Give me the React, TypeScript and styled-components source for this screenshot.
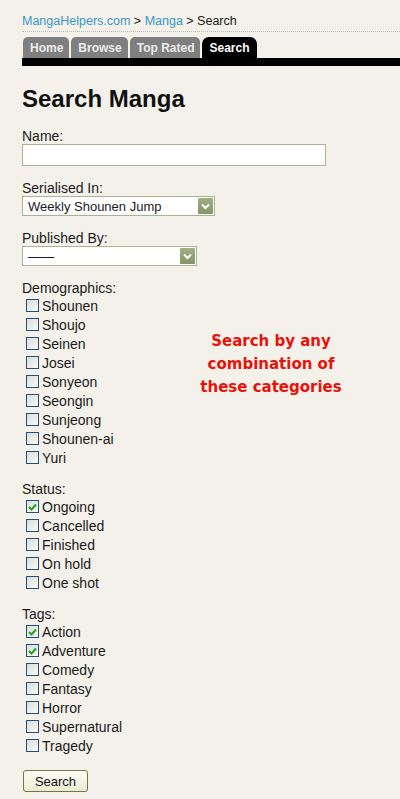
import React from 'react';
import styled, { createGlobalStyle } from 'styled-components';

const GlobalStyle = createGlobalStyle`
  html, body {
    margin: 0;
    padding: 0;
    background: #f4f1ea;
  }
  body {
    font-family: "Liberation Sans", Arial, sans-serif;
    color: #1a1a1a;
  }
`;

const Page = styled.div`
  padding: 13px 0 8px 22px;
`;

const Breadcrumb = styled.div`
  font-size: 12.5px;
  line-height: 16px;
  padding-bottom: 2px;
  border-bottom: 1px dotted #b9b9b9;
  color: #1a1a1a;
`;

const Crumb = styled.a`
  color: #3a97c4;
  text-decoration: none;
`;

const TabBar = styled.div`
  display: flex;
  gap: 2px;
  margin-top: 5px;
  padding-left: 1px;
`;

const Tab = styled.a<{ $active?: boolean }>`
  display: block;
  height: 21px;
  line-height: 22px;
  padding: ${p => (p.$active ? '0 7px' : '0 6px 0 7px')};
  border-radius: ${p => (p.$active ? '7px 7px 0 0' : '5px 5px 0 0')};
  background: ${p => (p.$active ? '#000' : '#7f7f7f')};
  color: ${p => (p.$active ? '#fff' : '#ececec')};
  font-size: 12px;
  font-weight: bold;
  text-decoration: none;
`;

const TabRule = styled.div`
  height: 8px;
  background: #000;
`;

const Title = styled.h1`
  margin: 19px 0 15px;
  font-size: 24px;
  line-height: 28px;
  font-weight: bold;
  color: #111;
`;

const Group = styled.div`
  margin-bottom: 14px;
`;

const Label = styled.label`
  display: block;
  font-size: 14px;
  line-height: 16px;
`;

const TextInput = styled.input`
  display: block;
  box-sizing: border-box;
  width: 304px;
  height: 22px;
  margin: 0;
  border: 1px solid #a9b38e;
  background: #fff;
`;

const SelectBox = styled.div<{ $width: number }>`
  display: flex;
  align-items: center;
  box-sizing: border-box;
  width: ${p => p.$width}px;
  height: 20px;
  padding: 1px;
  border: 1px solid #a9b38e;
  background: #fff;
`;

const SelectValue = styled.span`
  flex: 1;
  padding-left: 4px;
  font-size: 13px;
  white-space: nowrap;
`;

const SelectArrow = styled.span`
  display: flex;
  align-items: center;
  justify-content: center;
  width: 15px;
  height: 16px;
  background: linear-gradient(#a1ae86, #84936a);
  border-radius: 1px;
`;

const CheckRow = styled.label`
  display: flex;
  align-items: center;
  gap: 3px;
  height: 19px;
  padding-left: 4px;
  font-size: 14px;
`;

const Box = styled.span`
  display: flex;
  align-items: center;
  justify-content: center;
  box-sizing: border-box;
  width: 13px;
  height: 13px;
  border: 1px solid #1c5180;
  background: linear-gradient(135deg, #dcdcd4, #fbfbf8);
`;

const Split = styled.div`
  display: flex;
`;

const CheckList = styled.div`
  flex: 0 0 140px;
`;

const Note = styled.div`
  flex: 0 0 218px;
  margin-top: 34px;
  text-align: center;
  font-family: "DejaVu Sans", Verdana, sans-serif;
  font-weight: bold;
  font-size: 15px;
  line-height: 23px;
  color: #e8120c;
`;

const SubmitButton = styled.button`
  display: block;
  box-sizing: border-box;
  width: 65px;
  height: 22px;
  margin-top: 15px;
  margin-left: 1px;
  padding: 0;
  border: 1px solid #6e7b3e;
  border-radius: 3px;
  background: linear-gradient(#fdfdf6, #ebead4);
  font-family: "Liberation Sans", Arial, sans-serif;
  font-size: 13px;
  color: #111;
`;

const Chevron = () => (
  <svg width="9" height="7" viewBox="0 0 9 7">
    <path d="M1 1.5 L4.5 5 L8 1.5" fill="none" stroke="#fff" strokeWidth="2" />
  </svg>
);

const Check = () => (
  <svg width="9" height="8" viewBox="0 0 9 8">
    <path d="M1 4 L3.5 6.5 L8 1.5" fill="none" stroke="#21a121" strokeWidth="2" />
  </svg>
);

const Checkbox = ({ label, checked }: { label: string; checked?: boolean }) => (
  <CheckRow>
    <Box>{checked && <Check />}</Box>
    {label}
  </CheckRow>
);

const Select = ({ value, width }: { value: string; width: number }) => (
  <SelectBox $width={width}>
    <SelectValue>{value}</SelectValue>
    <SelectArrow>
      <Chevron />
    </SelectArrow>
  </SelectBox>
);

const demographics = [
  'Shounen', 'Shoujo', 'Seinen', 'Josei', 'Sonyeon',
  'Seongin', 'Sunjeong', 'Shounen-ai', 'Yuri'
];
const statuses = ['Ongoing', 'Cancelled', 'Finished', 'On hold', 'One shot'];
const tags = ['Action', 'Adventure', 'Comedy', 'Fantasy', 'Horror', 'Supernatural', 'Tragedy'];
const checkedStatus = ['Ongoing'];
const checkedTags = ['Action', 'Adventure'];

const App = () => (
  <>
    <GlobalStyle />
    <Page>
      <Breadcrumb>
        <Crumb href="#">MangaHelpers.com</Crumb> &gt; <Crumb href="#">Manga</Crumb> &gt; Search
      </Breadcrumb>
      <TabBar>
        <Tab href="#">Home</Tab>
        <Tab href="#">Browse</Tab>
        <Tab href="#">Top Rated</Tab>
        <Tab href="#" $active>Search</Tab>
      </TabBar>
      <TabRule />

      <Title>Search Manga</Title>

      <Group>
        <Label>Name:</Label>
        <TextInput type="text" />
      </Group>

      <Group>
        <Label>Serialised In:</Label>
        <Select value="Weekly Shounen Jump" width={193} />
      </Group>

      <Group>
        <Label>Published By:</Label>
        <Select value="——" width={175} />
      </Group>

      <Group>
        <Label>Demographics:</Label>
        <Split>
          <CheckList>
            {demographics.map(d => <Checkbox key={d} label={d} />)}
          </CheckList>
          <Note>
            Search by any<br />combination of<br />these categories
          </Note>
        </Split>
      </Group>

      <Group>
        <Label>Status:</Label>
        {statuses.map(s => <Checkbox key={s} label={s} checked={checkedStatus.includes(s)} />)}
      </Group>

      <Group>
        <Label>Tags:</Label>
        {tags.map(t => <Checkbox key={t} label={t} checked={checkedTags.includes(t)} />)}
        <SubmitButton>Search</SubmitButton>
      </Group>
    </Page>
  </>
);

export default App;
